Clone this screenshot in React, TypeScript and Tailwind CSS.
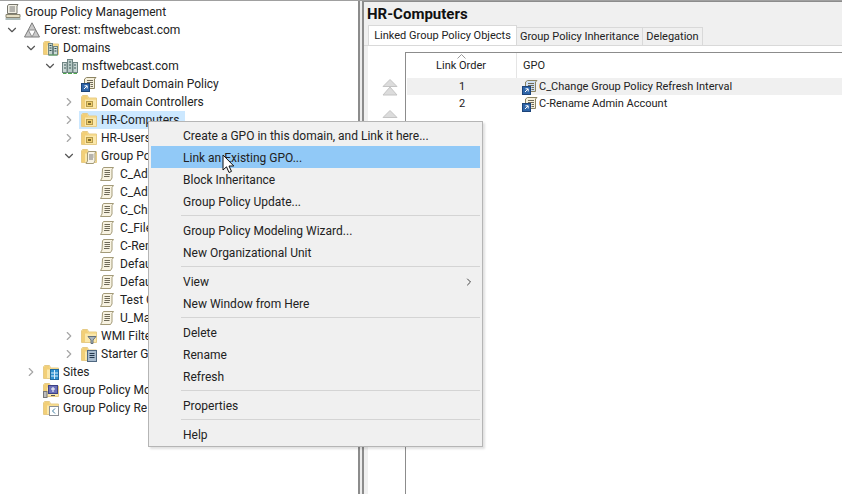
import type { ReactNode } from "react";
import { ChevronDown, ChevronRight } from "lucide-react";

function FolderBase({ children }: { children?: ReactNode }) {
  return (
    <svg width="16" height="16" viewBox="0 0 16 16" className="shrink-0">
      <path d="M0.5 3V14.5H15.5V4H7.5L6.5 1.5H1.5Z" fill="#fbe8ab" stroke="#e6cb86" />
      <path d="M1 3V14H4V5.5H15V4.5H7L6 2H2Z" fill="#f2cf78" />
      {children}
    </svg>
  );
}

function OuIcon() {
  return (
    <FolderBase>
      <rect x="5.5" y="7.5" width="6" height="5" fill="#f0cf6e" stroke="#b59a4c" />
      <rect x="7" y="9" width="3" height="2" fill="#7d6a2c" />
    </FolderBase>
  );
}

function ScrollIcon() {
  return (
    <svg width="16" height="16" viewBox="0 0 16 16" className="shrink-0">
      <path d="M3.5 1.5H13.5L12 3.5V12L10.5 14.5H0.5L2 12L2.5 3Z" fill="#f8f3e2" stroke="#a39a78" />
      <path d="M4.5 4.5H10M4.5 6.5H10M4.5 8.5H10M4 10.5H9.5" stroke="#6f6a58" />
    </svg>
  );
}

function GpoFolderIcon() {
  return (
    <FolderBase>
      <path d="M7.5 3.5H15L14 5V13L12.5 15.5H5L6.5 13V5Z" fill="#f7f3e6" stroke="#a39a78" />
      <path d="M8 7H12.5M8 9H12.5M8 11H12" stroke="#777" />
    </FolderBase>
  );
}

function LinkIcon({ selected }: { selected?: boolean }) {
  return (
    <svg width="16" height="16" viewBox="0 0 16 16" className="shrink-0">
      <path d="M5.5 1.5H15L13.5 3V12.5H3.5V3Z" fill={selected ? "#cfe0f2" : "#f6f0dc"} stroke="#8c8463" />
      <path d="M6 4.5H12M6 6.5H12M9.5 8.5H12M9.5 10.5H12" stroke="#6f6a58" />
      <rect x="0.5" y="7.5" width="8" height="8" fill="#2f65a8" stroke="#1c4479" />
      <path d="M3 13L6 10M3.5 9.8H6.2V12.5" fill="none" stroke="#fff" />
    </svg>
  );
}

function ForestIcon() {
  return (
    <svg width="16" height="16" viewBox="0 0 16 16" className="shrink-0">
      <path d="M8 0.8L15.5 15H0.5Z" fill="#c9c9c9" stroke="#7c7c7c" />
      <path d="M4.3 8H11.7L8 15Z" fill="#fff" stroke="#8c8c8c" />
    </svg>
  );
}

function DomainsIcon() {
  return (
    <FolderBase>
      <rect x="5.5" y="3.5" width="4" height="11.5" fill="#c3d2cf" stroke="#6f8583" />
      <rect x="10.5" y="6.5" width="4" height="8.5" fill="#cddbd8" stroke="#6f8583" />
      <path d="M6.5 5.5H8.5M6.5 8H8.5M6.5 10.5H8.5M11.5 8.5H13.5M11.5 11H13.5" stroke="#2f4f4d" />
      <path d="M6 15H14" stroke="#5aa05a" />
    </FolderBase>
  );
}

function DomainIcon() {
  return (
    <svg width="16" height="16" viewBox="0 0 16 16" className="shrink-0">
      <rect x="0.5" y="4.5" width="4.5" height="10" fill="#c9d6d4" stroke="#6f8583" />
      <rect x="5.5" y="1.5" width="5" height="13" fill="#b7c9c6" stroke="#6f8583" />
      <rect x="11" y="4.5" width="4.5" height="10" fill="#c9d6d4" stroke="#6f8583" />
      <path d="M2 7H4M2 10H4M7 4H9M7 7H9M7 10H9M12 7H14M12 10H14" stroke="#3a5a58" />
      <path d="M1 15.5H4.5M6 15.5H10M11.5 15.5H15" stroke="#4ea84e" />
    </svg>
  );
}

function RootIcon() {
  return (
    <svg width="16" height="16" viewBox="0 0 16 16" className="shrink-0">
      <path d="M3.5 0.5H13L12 2V9.5H2.5V2Z" fill="#f1efe4" stroke="#77766c" />
      <path d="M4.5 3H10M4.5 5H10M4.5 7H10" stroke="#777" />
      <path d="M1 10.5H15V13.5H1Z" fill="#e6dfc4" stroke="#8a8672" />
      <path d="M0.5 15H15.5" stroke="#5f7a78" />
    </svg>
  );
}

function FilterFolderIcon() {
  return (
    <FolderBase>
      <path d="M7 8.5H15L12 12V15.5H10V12Z" fill="#a9b5c0" stroke="#65707a" />
    </FolderBase>
  );
}

function StarterFolderIcon() {
  return (
    <FolderBase>
      <rect x="6.5" y="4.5" width="9" height="11" fill="#a9bccf" stroke="#4f6780" />
      <path d="M8.5 7.5H13.5M8.5 9.5H13.5M8.5 11.5H13.5" stroke="#24384d" />
    </FolderBase>
  );
}

function SitesIcon() {
  return (
    <FolderBase>
      <rect x="7.5" y="5.5" width="8" height="10" fill="#2f92d0" stroke="#1f6aa0" />
      <path d="M11.5 6V15M8 9H15M8 12H15" stroke="#d8eefb" />
    </FolderBase>
  );
}

function ModelingIcon() {
  return (
    <FolderBase>
      <rect x="5.5" y="3.5" width="9" height="8" fill="#6c70b8" stroke="#3d4185" />
      <path d="M8 13.5H12" stroke="#555" />
      <rect x="0.5" y="9.5" width="3.5" height="6" fill="#bdbdbd" stroke="#777" />
      <path d="M8 7H12M10 5V10" stroke="#fff" />
    </FolderBase>
  );
}

function ResultsIcon() {
  return (
    <FolderBase>
      <rect x="6.5" y="6.5" width="9" height="9" fill="#fff" stroke="#8a8f96" />
      <path d="M12 8.5L9.5 11L12 13.5" fill="none" stroke="#3a7a9f" />
    </FolderBase>
  );
}

type TreeRow = {
  label: string;
  indent: string;
  icon: ReactNode;
  arrow?: "open" | "closed";
  active?: boolean;
};

// labels stop where the context menu covers them
const rows: TreeRow[] = [
  { label: "Group Policy Management", indent: "-ml-[14px]", icon: <RootIcon /> },
  { label: "Forest: msftwebcast.com", indent: "pl-[5px]", icon: <ForestIcon />, arrow: "open" },
  { label: "Domains", indent: "pl-[24px]", icon: <DomainsIcon />, arrow: "open" },
  { label: "msftwebcast.com", indent: "pl-[43px]", icon: <DomainIcon />, arrow: "open" },
  { label: "Default Domain Policy", indent: "pl-[62px]", icon: <LinkIcon /> },
  { label: "Domain Controllers", indent: "pl-[62px]", icon: <OuIcon />, arrow: "closed" },
  { label: "HR-Computers", indent: "pl-[62px]", icon: <OuIcon />, arrow: "closed", active: true },
  { label: "HR-Users", indent: "pl-[62px]", icon: <OuIcon />, arrow: "closed" },
  { label: "Group Po", indent: "pl-[62px]", icon: <GpoFolderIcon />, arrow: "open" },
  { label: "C_Ad", indent: "pl-[81px]", icon: <ScrollIcon /> },
  { label: "C_Ad", indent: "pl-[81px]", icon: <ScrollIcon /> },
  { label: "C_Ch", indent: "pl-[81px]", icon: <ScrollIcon /> },
  { label: "C_File", indent: "pl-[81px]", icon: <ScrollIcon /> },
  { label: "C-Ren", indent: "pl-[81px]", icon: <ScrollIcon /> },
  { label: "Defau", indent: "pl-[81px]", icon: <ScrollIcon /> },
  { label: "Defau", indent: "pl-[81px]", icon: <ScrollIcon /> },
  { label: "Test G", indent: "pl-[81px]", icon: <ScrollIcon /> },
  { label: "U_Ma", indent: "pl-[81px]", icon: <ScrollIcon /> },
  { label: "WMI Filte", indent: "pl-[62px]", icon: <FilterFolderIcon />, arrow: "closed" },
  { label: "Starter Gl", indent: "pl-[62px]", icon: <StarterFolderIcon />, arrow: "closed" },
  { label: "Sites", indent: "pl-[24px]", icon: <SitesIcon />, arrow: "closed" },
  { label: "Group Policy Mo", indent: "pl-[24px]", icon: <ModelingIcon /> },
  { label: "Group Policy Re", indent: "pl-[24px]", icon: <ResultsIcon /> },
];

function Tree() {
  return (
    <div className="w-[360px] shrink-0 overflow-hidden pt-[2px] border-r-2 border-[#8c8c8c]">
      {rows.map((row, i) => (
        <div key={i} className={`flex h-[18px] items-center ${row.indent}`}>
          <span className="flex w-[17px] shrink-0">
            {row.arrow === "open" && <ChevronDown size={14} strokeWidth={2} className="text-[#555]" />}
            {row.arrow === "closed" && <ChevronRight size={14} strokeWidth={2} className="text-[#a6a6a6]" />}
          </span>
          <span className={`flex h-[18px] items-center pl-[2px] ${row.active ? "w-[106px] bg-[#cce8ff]" : ""}`}>
            {row.icon}
            <span className="ml-[4px] leading-[18px] whitespace-nowrap">{row.label}</span>
          </span>
        </div>
      ))}
    </div>
  );
}

function ArrowStack({ double }: { double?: boolean }) {
  return (
    <svg width="16" height={double ? 17 : 9} viewBox={double ? "0 0 16 17" : "0 0 16 9"}>
      <path d="M8 0.5L15 7.5H1Z" fill="#dcdcdc" stroke="#c4c4c4" />
      {double && <path d="M8 8L15 16H1Z" fill="#dcdcdc" stroke="#c4c4c4" />}
    </svg>
  );
}

function RightPane() {
  return (
    <div className="flex flex-1 flex-col border-l-2 border-t border-[#8c8c8c] bg-[#f0f0f0] text-[11px]">
      <h1 className="pl-[3px] pt-[3px] text-[15px] leading-[18px] font-bold text-[#111]">HR-Computers</h1>
      <div className="mt-[3px] flex h-[20px] items-end pl-[4px] border-b border-[#d9d9d9]">
        <div className="flex h-[20px] w-[149px] items-center justify-center bg-white pt-[1px] border border-b-0 border-[#d9d9d9] whitespace-nowrap">
          Linked Group Policy Objects
        </div>
        <div className="flex h-[18px] w-[126px] items-center justify-center pt-[2px] border-r border-t border-[#d9d9d9] whitespace-nowrap">
          Group Policy Inheritance
        </div>
        <div className="flex h-[18px] w-[60px] items-center justify-center pt-[2px] border-r border-t border-[#d9d9d9] whitespace-nowrap">
          Delegation
        </div>
      </div>
      <div className="ml-[4px] flex flex-1 bg-white pt-[6px]">
        <div className="flex w-[37px] shrink-0 flex-col gap-[14px] pl-[14px] pt-[27px]">
          <ArrowStack double />
          <ArrowStack />
        </div>
        <div className="flex-1 border-l border-t border-[#8c8c8c]">
          <div className="flex h-[25px]">
            <div className="relative flex w-[111px] items-center justify-center pt-[2px] border-r border-[#e5e5e5]">
              <svg width="9" height="5" viewBox="0 0 9 5" className="absolute left-[51px] top-[1px]">
                <path d="M0.5 4.5L4.5 0.5L8.5 4.5" fill="none" stroke="#9a9a9a" />
              </svg>
              Link Order
            </div>
            <div className="flex items-center pl-[6px] pt-[2px]">GPO</div>
          </div>
          <div className="ml-[1px] flex h-[17px] items-center bg-[#f0f0f0]">
            <span className="w-[110px] pt-[1px] text-center">1</span>
            <span className="ml-[5px] flex items-center gap-[1px]">
              <LinkIcon selected />
              <span className="pt-[1px]">C_Change Group Policy Refresh Interval</span>
            </span>
          </div>
          <div className="ml-[1px] flex h-[17px] items-center">
            <span className="w-[110px] pt-[2px] text-center">2</span>
            <span className="ml-[5px] flex items-center gap-[1px]">
              <LinkIcon />
              <span className="pt-[2px]">C-Rename Admin Account</span>
            </span>
          </div>
        </div>
      </div>
    </div>
  );
}

const menu: (string | null)[] = [
  "Create a GPO in this domain, and Link it here...",
  "Link an Existing GPO...",
  "Block Inheritance",
  "Group Policy Update...",
  null,
  "Group Policy Modeling Wizard...",
  "New Organizational Unit",
  null,
  "View",
  "New Window from Here",
  null,
  "Delete",
  "Rename",
  "Refresh",
  null,
  "Properties",
  null,
  "Help",
];

function ContextMenu() {
  return (
    <div className="absolute left-[148px] top-[120px] w-[335px] border border-[#b5b5b5] bg-[#f0f0f0] px-[2px] pt-[2px] pb-[1px] shadow-[2px_2px_2px_rgba(0,0,0,0.12)]">
      {menu.map((item, i) =>
        item === null ? (
          <div key={i} className="ml-[30px] my-[3px] h-px bg-[#d4d4d4]" />
        ) : (
          <div
            key={item}
            className={`flex h-[22px] items-center justify-between pl-[32px] pr-[5px] pt-[1px] ${
              item === "Link an Existing GPO..." ? "bg-[#91c9f7]" : ""
            }`}
          >
            {item}
            {item === "View" && <ChevronRight size={12} className="text-[#444]" />}
          </div>
        )
      )}
    </div>
  );
}

function Cursor() {
  return (
    <svg width="13" height="20" viewBox="0 0 13 20" className="absolute left-[222px] top-[153px]">
      <path d="M1 1V16L4.5 12.8L7 18.5L9.5 17.4L7 12H11.8Z" fill="#fff" stroke="#111" strokeWidth="1" />
    </svg>
  );
}

export default function App() {
  return (
    <div className="relative flex h-[494px] w-[842px] overflow-hidden border-t border-[#a0a0a0] bg-white font-['Roboto',sans-serif] text-[12px] text-[#222]">
      <Tree />
      <div className="w-[2px] shrink-0 bg-[#ececec]" />
      <RightPane />
      <ContextMenu />
      <Cursor />
    </div>
  );
}
